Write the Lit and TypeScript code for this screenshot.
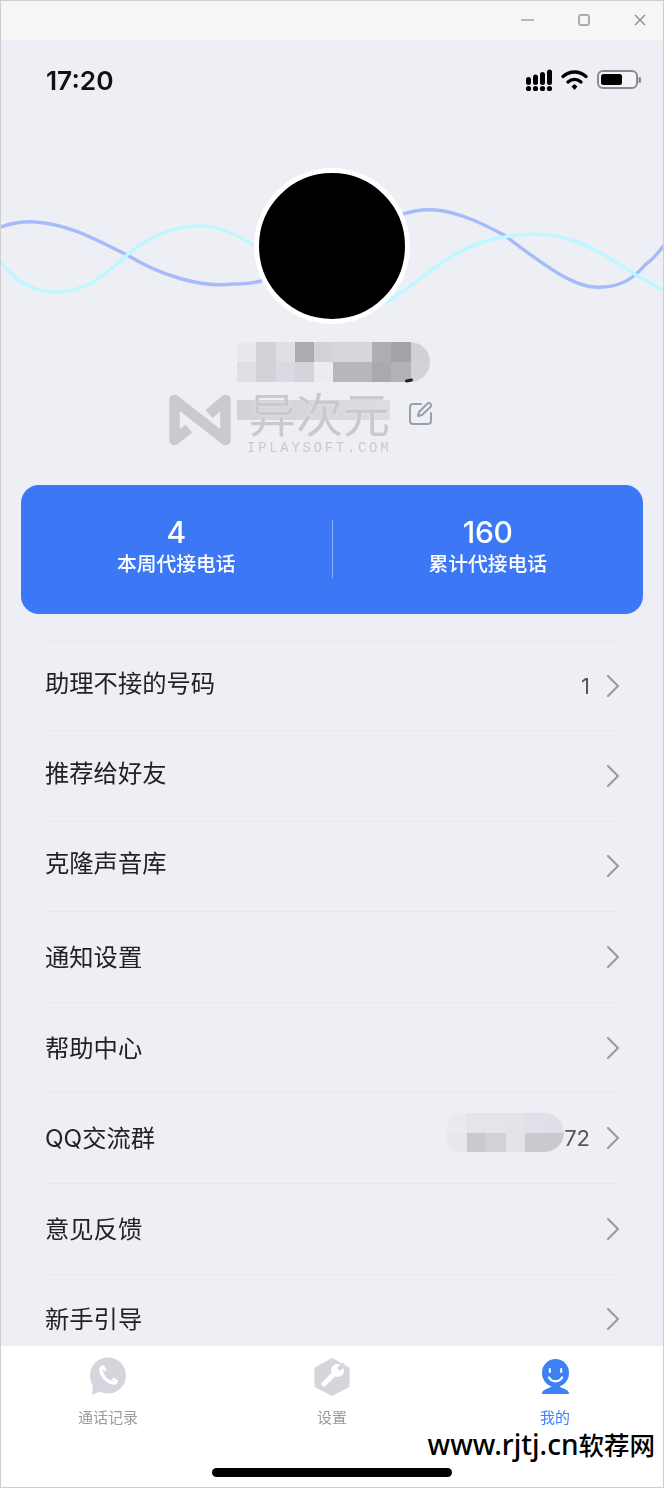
import { LitElement, css, html, svg } from 'lit'
import { customElement } from 'lit/decorators.js'

const nameTop = ['#e8e9ee', '#d2d3d7', '#dfe0e5', '#abacb0', '#d2d3d7', '#d6d7dc', '#d6d7db', '#aeafb3', '#a3a4a8', '#d0d1d5']
const nameBottom = ['#dfe0e5', '#d2d3d7', '#dadbe2', '#d4d5da', '#ebecf1', '#b7b8bc', '#b7b8bc', '#a9aaaf', '#b2b3b7', '#d2d3d7']
const qqTop = ['#e9eaee', '#e4e5ea', '#e4e5ea', '#e3e4ea', '#e0e1e8', '#dfe0e7']
const qqBottom = ['#e7e8eb', '#c9cacd', '#d1d2d5', '#e3e4e8', '#c9cacd', '#c9cacd']

const rows = [
  { label: '助理不接的号码', value: '1', lift: true },
  { label: '推荐给好友', lift: true },
  { label: '克隆声音库', lift: true },
  { label: '通知设置' },
  { label: '帮助中心' },
  { label: 'QQ交流群', value: '72', mosaic: true },
  { label: '意见反馈' },
  { label: '新手引导' },
]

const chevron = svg`<svg class="chevron" width="14" height="24" viewBox="0 0 14 24" fill="none" stroke="#9a9ba1" stroke-width="2.2" stroke-linecap="round" stroke-linejoin="round"><path d="M2 2l10 10L2 22"/></svg>`

@customElement('app-root')
export class AppRoot extends LitElement {
  static styles = css`
    :host {
      display: block;
      font-family: Inter, "Noto Sans CJK SC", sans-serif;
    }
    .app {
      position: relative;
      display: flex;
      flex-direction: column;
      width: 664px;
      height: 1488px;
      overflow: hidden;
      background: #eeeff4;
      color: #222;
    }
    .app::after {
      content: '';
      position: absolute;
      inset: 0;
      border: 1px solid #cfcfcf;
      pointer-events: none;
    }
    .titlebar {
      display: flex;
      flex: none;
      justify-content: flex-end;
      align-items: center;
      gap: 44px;
      height: 40px;
      padding-right: 18px;
      box-sizing: border-box;
      background: #f6f6f6;
    }
    .main {
      flex: 1;
      min-height: 0;
      overflow: hidden;
      filter: blur(0.35px);
    }
    .status {
      display: flex;
      align-items: center;
      justify-content: space-between;
      height: 80px;
      padding: 0 23px 0 46px;
      font-size: 26.3px;
      font-weight: 600;
      color: #111;
    }
    .status-icons {
      display: block;
    }
    .hero {
      position: relative;
      height: 365px;
      padding-top: 48px;
      box-sizing: border-box;
    }
    .waves {
      position: absolute;
      left: 0;
      top: 0;
    }
    .avatar {
      position: relative;
      width: 146px;
      height: 146px;
      margin: 0 auto;
      border: 5px solid #fff;
      border-radius: 50%;
      background: #000;
    }
    .name {
      position: relative;
      margin: 18px 0 0 237px;
      display: grid;
      grid-template-columns: repeat(10, 19.3px);
      grid-auto-rows: 20px;
      width: 193px;
      border-radius: 0 20px 20px 0;
      overflow: hidden;
    }
    .speck {
      position: absolute;
      left: 405px;
      top: 259px;
      width: 8px;
      height: 3px;
      border-radius: 2px;
      background: #222;
      transform: rotate(-12deg);
    }
    .sub {
      display: flex;
      align-items: flex-start;
      margin: 18px 0 0 237px;
    }
    .sub-block {
      width: 153px;
      height: 20px;
      background: linear-gradient(90deg, #d2d3d7, #d8d9dd 60%, #dcdde1);
    }
    .edit {
      margin: 1px 0 0 18px;
    }
    .watermark {
      position: absolute;
      left: 160px;
      top: 265px;
      display: flex;
      color: #c9cacd;
    }
    .wm-text {
      margin-left: 9px;
      padding-top: 2px;
      display: flex;
      flex-direction: column;
      align-items: flex-start;
    }
    .wm-title {
      font-size: 47px;
      line-height: 50px;
      font-weight: 400;
      font-family: "Noto Sans CJK SC", sans-serif;
      text-shadow: 0 0 2px #eeeff4;
    }
    .wm-url {
      margin-top: 3px;
      margin-left: -2px;
      font-family: "Liberation Mono", monospace;
      font-size: 14px;
      line-height: 16px;
      letter-spacing: 2.7px;
    }
    .card {
      display: flex;
      height: 129px;
      margin: 0 21px;
      padding-top: 35px;
      box-sizing: border-box;
      border-radius: 18px;
      background: #3c78f6;
      color: #fff;
    }
    .stat {
      flex: 1;
      height: 58px;
      display: flex;
      flex-direction: column;
      align-items: center;
    }
    .stat + .stat {
      border-left: 1px solid rgba(255, 255, 255, 0.4);
    }
    .stat-num {
      font-size: 30px;
      line-height: 24px;
      font-weight: 500;
      letter-spacing: -0.3px;
    }
    .stat-label {
      margin-top: 6px;
      font-size: 19.8px;
      line-height: 28px;
      font-weight: 500;
    }
    .list {
      margin: 25.5px 45px 0;
    }
    .row {
      display: flex;
      align-items: center;
      height: 90.6px;
      box-sizing: border-box;
      border-top: 1.5px solid #e7e8ec;
    }
    .row:first-child {
      border-top: 2px solid #ebecf0;
    }
    .row-label {
      flex: 1;
      font-size: 24.3px;
      line-height: 34px;
      color: #222;
    }
    .lift {
      padding-bottom: 6px;
    }
    .row-value {
      font-size: 22px;
      color: #55565a;
      margin-right: 16px;
    }
    .chevron {
      flex: none;
      margin-right: -1px;
    }
    .qq-mosaic {
      display: grid;
      grid-template-columns: repeat(6, 19.5px);
      grid-auto-rows: 19.5px;
      width: 117px;
      margin-bottom: 11px;
      border-radius: 14px 22px 22px 14px;
      overflow: hidden;
    }
    .tabbar {
      position: relative;
      flex: none;
      display: grid;
      grid-template-columns: 216px 232px 214px;
      align-items: start;
      height: 142px;
      padding-top: 10px;
      box-sizing: border-box;
      background: #fff;
    }
    .tab {
      display: flex;
      flex-direction: column;
      align-items: center;
      gap: 8px;
      font-size: 15px;
      line-height: 20px;
      color: #9c9c9f;
      filter: blur(0.35px);
    }
    .tab.active {
      color: #3d82f5;
    }
    .site {
      position: absolute;
      right: 9px;
      top: 78px;
      font-family: "Noto Sans", "Noto Sans CJK SC", sans-serif;
      font-size: 28px;
      line-height: 40px;
      font-weight: 500;
      color: #000;
      white-space: nowrap;
    }
    .site-cjk {
      font-size: 25.5px;
    }
    .home {
      position: absolute;
      left: 212px;
      top: 122px;
      width: 240px;
      height: 9px;
      border-radius: 5px;
      background: #000;
    }
  `

  private renderCells(colors: string[]) {
    return colors.map((c) => html`<div style="background:${c}"></div>`)
  }

  render() {
    return html`
      <div class="app">
        <div class="titlebar">
          <svg width="13" height="14" viewBox="0 0 13 14" fill="none" stroke="#b8b8b8" stroke-width="2"><path d="M0 7h13"/></svg>
          <svg width="12" height="12" viewBox="0 0 12 12" fill="none" stroke="#adadad" stroke-width="2"><rect x="1" y="1" width="10" height="10" rx="2"/></svg>
          <svg width="12" height="12" viewBox="0 0 12 12" fill="none" stroke="#8c8c8c" stroke-width="1.4"><path d="M1 1l10 10M11 1L1 11"/></svg>
        </div>

        <div class="main">
          <div class="status">
            <span>17:20</span>
            <svg class="status-icons" width="116" height="26" viewBox="0 0 116 26">
              <g fill="#000">
                <rect x="1" y="10" width="5" height="8" rx="2.5"/><circle cx="3.5" cy="21.500" r="2.600"/>
                <rect x="8" y="7.500" width="5" height="10.500" rx="2.500"/><circle cx="10.500" cy="21.500" r="2.600"/>
                <rect x="15" y="5" width="5" height="13" rx="2.500"/><circle cx="17.500" cy="21.500" r="2.600"/>
                <rect x="22" y="2.500" width="5" height="15.500" rx="2.500"/><circle cx="24.500" cy="21.500" r="2.600"/>
              </g>
              <g fill="none" stroke="#000" stroke-width="3.400" stroke-linecap="round">
                <path d="M38 9.500c7-6 16-6 23 0"/>
                <path d="M43 15c4-3.500 9-3.500 13 0"/>
              </g>
              <path d="M46.500 19.500l3-2.500 3 2.500-3 3.500z" fill="#000"/>
              <rect x="73" y="4" width="39" height="17" rx="5" fill="#f4f4f6" stroke="#8b8b8d" stroke-width="2"/>
              <rect x="76" y="7" width="21" height="11" rx="2.500" fill="#000"/>
              <rect x="113.500" y="10" width="2.500" height="6" rx="1.200" fill="#8b8b8d"/>
            </svg>
          </div>

          <div class="hero">
            <svg class="waves" width="664" height="300" viewBox="0 120 664 300" fill="none" stroke-width="3.400" stroke-linecap="round">
              <g stroke="#a6bcfa">
                <path d="M-2 228C10 223 25 221 35 222C70 224 100 242 127 255C160 275 200 288 233 284C245 284 255 283 265 280"/>
                <path d="M400 215C415 210 425 209 435 210C460 212 485 225 504 235C540 262 575 290 602 287C620 287 635 277 645 265C655 258 660 250 666 243"/>
              </g>
              <g stroke="#bdf7ff">
                <path d="M-2 258C15 285 40 293 59 292C85 292 105 275 127 255C150 236 175 226 199 226C220 226 238 235 256 247"/>
                <path d="M384 304C425 280 450 245 504 237C525 233 545 233 565 238C595 246 620 265 636 275L666 292"/>
              </g>
            </svg>
            <div class="avatar"></div>
            <div class="name">
              ${this.renderCells(nameTop)}
              ${this.renderCells(nameBottom)}
            </div>
            <div class="speck"></div>
            <div class="sub">
              <div class="sub-block"></div>
              <svg class="edit" width="26" height="24" viewBox="0 0 26 24" fill="none" stroke="#9d9fa8" stroke-width="2" stroke-linecap="round" stroke-linejoin="round">
                <path d="M13 3H5a3 3 0 0 0-3 3v14a3 3 0 0 0 3 3h15a3 3 0 0 0 3-3v-8"/>
                <path d="M10 15l1-4 8.500-8.500a1.800 1.800 0 0 1 2.600 0l.6.6a1.800 1.800 0 0 1 0 2.600L14 14z"/>
              </svg>
            </div>
            <div class="watermark">
              <svg width="80" height="70" viewBox="0 0 80 70" fill="none" stroke="#c9cacd" stroke-width="10.500" stroke-linejoin="round" stroke-linecap="butt">
                <path d="M29 43.500L14.500 55V15L65.500 55V15L49 29"/>
              </svg>
              <div class="wm-text">
                <span class="wm-title">异次元</span>
                <span class="wm-url">IPLAYSOFT.COM</span>
              </div>
            </div>
          </div>

          <div class="card">
            <div class="stat">
              <span class="stat-num">4</span>
              <span class="stat-label">本周代接电话</span>
            </div>
            <div class="stat">
              <span class="stat-num">160</span>
              <span class="stat-label">累计代接电话</span>
            </div>
          </div>

          <div class="list">
            ${rows.map((r) => html`
              <div class="row">
                <span class="row-label ${r.lift ? 'lift' : ''}">${r.label}</span>
                ${r.mosaic ? html`<div class="qq-mosaic">${this.renderCells(qqTop)}${this.renderCells(qqBottom)}</div>` : ''}
                ${r.value ? html`<span class="row-value">${r.value}</span>` : ''}
                ${chevron}
              </div>
            `)}
          </div>
        </div>

        <div class="tabbar">
          <div class="tab">
            <svg width="44" height="44" viewBox="0 0 44 44">
              <circle cx="22" cy="19.500" r="18" fill="#d6d5de"/>
              <path d="M7 28l-1 11 11-5z" fill="#d6d5de"/>
              <path d="M15 12.500c0 8 6.500 14.500 14.500 14.500" fill="none" stroke="#fff" stroke-width="3.500" stroke-linecap="round"/>
              <path d="M14.500 13l2.500-2.500 2.500 4M29 27.500l2-2.500-4.500-2.500" fill="#fff" stroke="#fff" stroke-width="2.500" stroke-linejoin="round"/>
            </svg>
            <span>通话记录</span>
          </div>
          <div class="tab">
            <svg width="44" height="44" viewBox="0 0 44 44">
              <path d="M22 3.500L38 12.500V30L22 38.500L6 30V12.500z" fill="#d6d5de" stroke="#d6d5de" stroke-width="3" stroke-linejoin="round"/>
              <path d="M14 28L25 17" stroke="#fff" stroke-width="5" stroke-linecap="round"/>
              <circle cx="27.500" cy="14.500" r="6.500" fill="#fff"/>
              <path d="M28.500 13.500L34 8" stroke="#d6d5de" stroke-width="4.500"/>
            </svg>
            <span>设置</span>
          </div>
          <div class="tab active">
            <svg width="44" height="44" viewBox="0 0 44 44">
              <ellipse cx="22.500" cy="17" rx="13.500" ry="14" fill="#3d82f5"/>
              <path d="M9 38c0-5 7-5 10-8h7c3 3 10 3 10 8z" fill="#3d82f5"/>
              <rect x="15.800" y="12" width="2" height="5" rx="1" fill="#fff"/>
              <rect x="27.200" y="12" width="2" height="5" rx="1" fill="#fff"/>
              <path d="M16 21.500c3 5 10 5 13 0" fill="none" stroke="#fff" stroke-width="2.400" stroke-linecap="round"/>
            </svg>
            <span>我的</span>
          </div>
          <div class="site">www.rjtj.cn<span class="site-cjk">软荐网</span></div>
          <div class="home"></div>
        </div>
      </div>
    `
  }
}
